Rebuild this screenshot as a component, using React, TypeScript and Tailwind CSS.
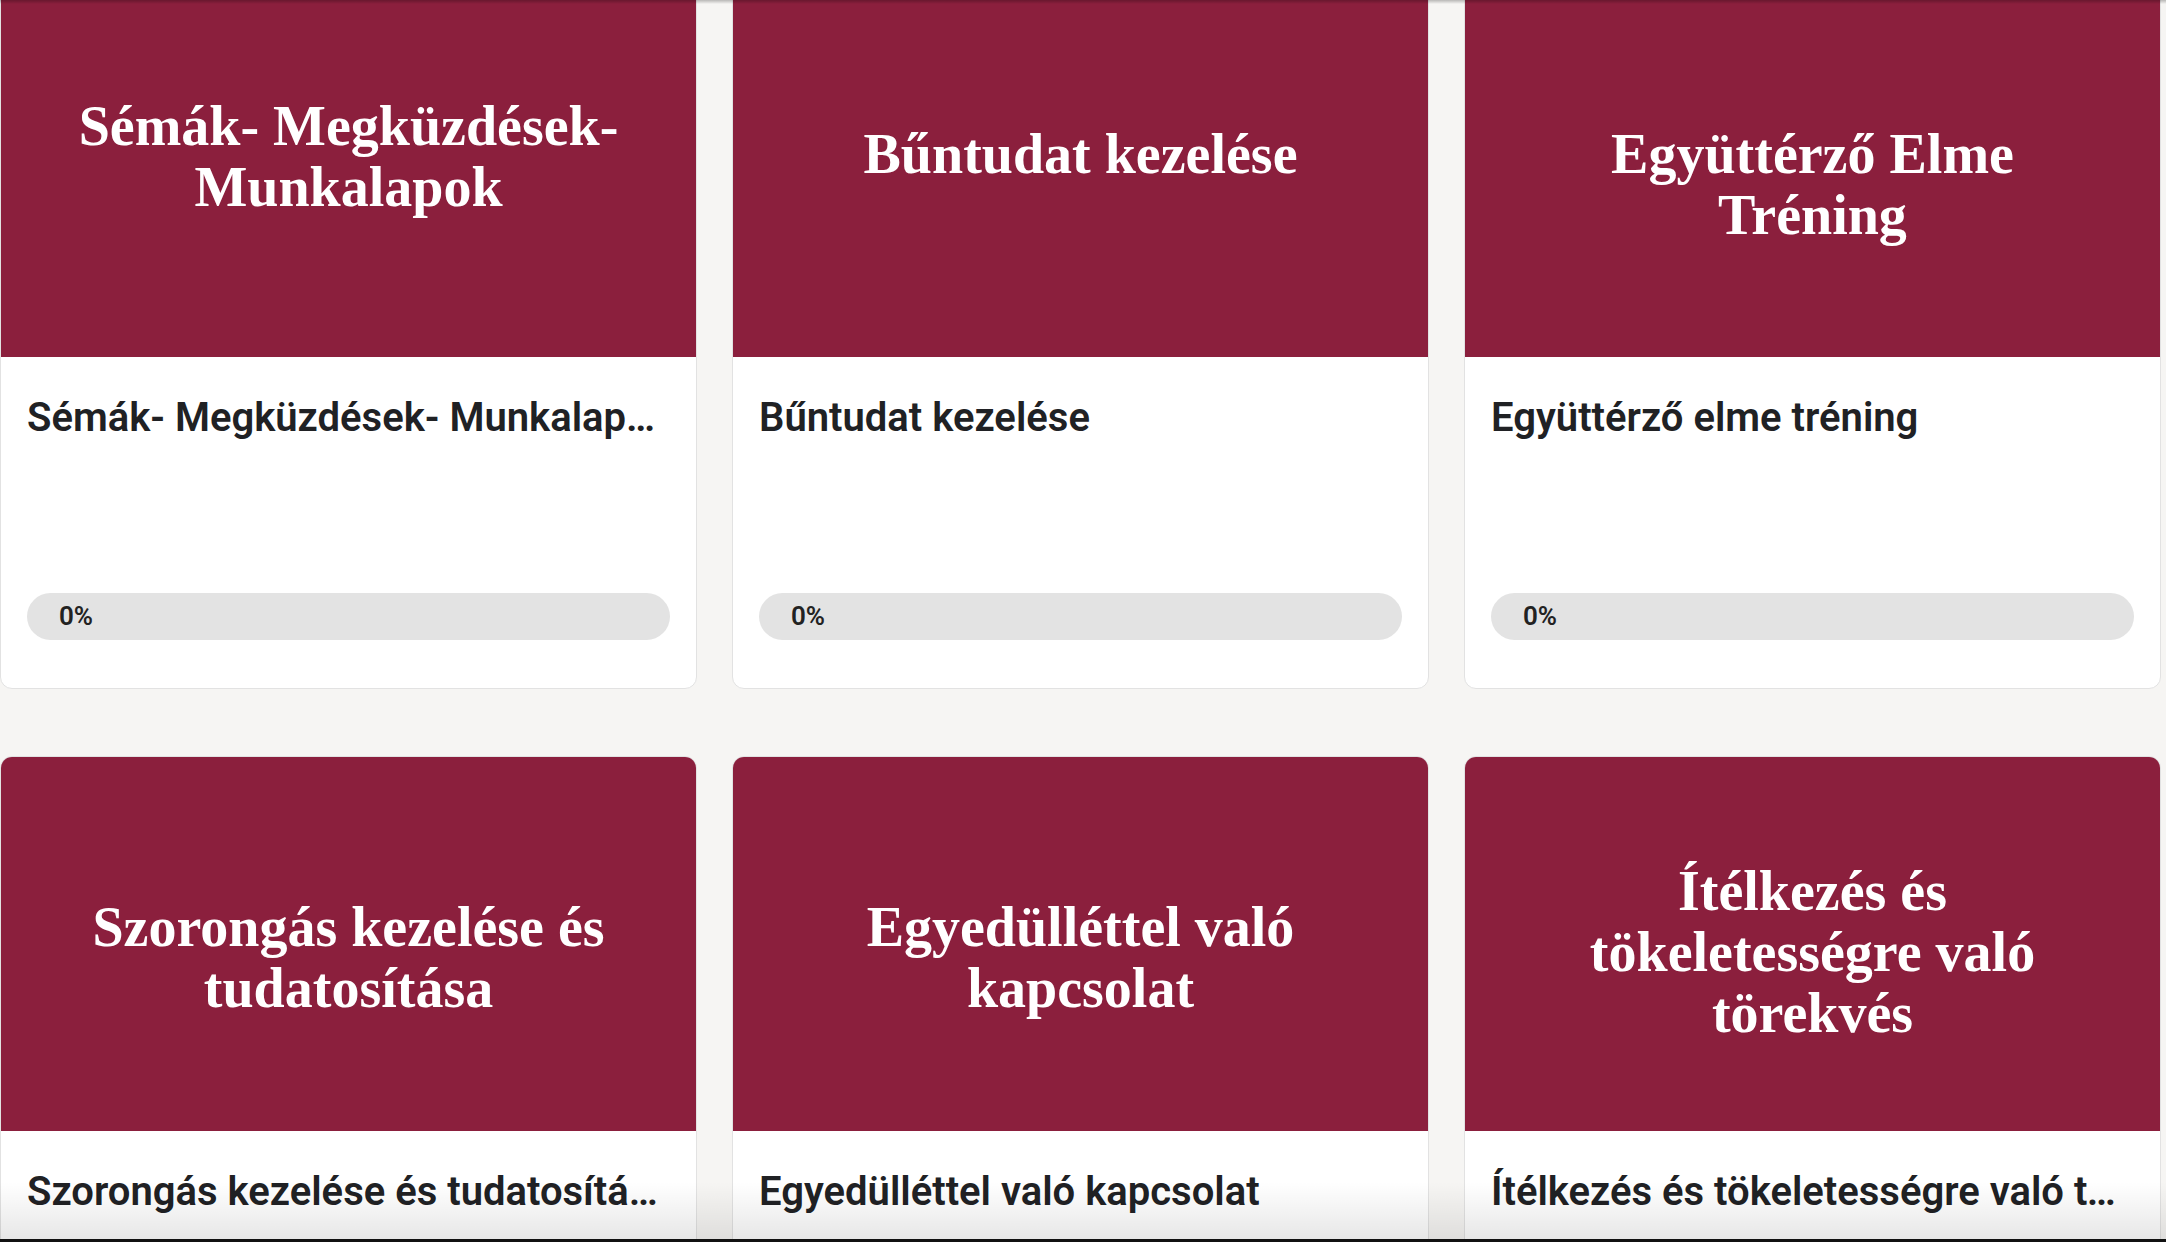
import React from "react";

type Course = {
  id: number;
  cover: string[];
  coverPad: string;
  title: string;
  progress: number;
};

const courses: Course[] = [
  {
    id: 1,
    cover: ["Sémák- Megküzdések-", "Munkalapok"],
    coverPad: "pb-[26px]",
    title: "Sémák- Megküzdések- Munkalapok",
    progress: 0,
  },
  {
    id: 2,
    cover: ["Bűntudat kezelése"],
    coverPad: "pb-[32px]",
    title: "Bűntudat kezelése",
    progress: 0,
  },
  {
    id: 3,
    cover: ["Együttérző Elme", "Tréning"],
    coverPad: "pt-[30px]",
    title: "Együttérző elme tréning",
    progress: 0,
  },
  {
    id: 4,
    cover: ["Szorongás kezelése és", "tudatosítása"],
    coverPad: "pt-[28px]",
    title: "Szorongás kezelése és tudatosítása",
    progress: 0,
  },
  {
    id: 5,
    cover: ["Egyedülléttel való", "kapcsolat"],
    coverPad: "pt-[28px]",
    title: "Egyedülléttel való kapcsolat",
    progress: 0,
  },
  {
    id: 6,
    cover: ["Ítélkezés és", "tökeletességre való", "törekvés"],
    coverPad: "pt-[16px]",
    title: "Ítélkezés és tökeletességre való törekvés",
    progress: 0,
  },
];

const CourseCard: React.FC<{ course: Course }> = ({ course }) => {
  return (
    <div className="overflow-hidden rounded-[12px] border border-[#e2e2e2] bg-white">
      <div
        className={`flex h-[374px] flex-col items-center justify-center bg-[#8b1f3d] text-center font-['Liberation_Serif',serif] text-[56px] font-bold leading-[61px] text-white ${course.coverPad}`}
      >
        {course.cover.map((line) => (
          <div key={line}>{line}</div>
        ))}
      </div>
      <div className="flex h-[331px] flex-col px-[26px] pt-[37px] pb-[48px]">
        <h3 className="truncate pr-[8px] font-['Roboto',sans-serif] text-[40px] font-semibold leading-[1.2] text-[#202124]">
          {course.title}
        </h3>
        <div className="relative mt-auto h-[47px] overflow-hidden rounded-full bg-[#e3e3e3]">
          <div
            className="absolute inset-y-0 left-0 bg-[#8b1f3d]"
            style={{ width: `${course.progress}%` }}
          />
          <span className="relative flex h-full items-center pl-[32px] font-['Roboto',sans-serif] text-[26px] font-semibold text-[#222]">
            {course.progress}%
          </span>
        </div>
      </div>
    </div>
  );
};

export default function App() {
  return (
    <div className="relative h-screen overflow-hidden bg-[#f6f5f3]">
      <div className="-mt-[18px] grid grid-cols-[repeat(3,697px)] gap-x-[35px] gap-y-[67px]">
        {courses.map((course) => (
          <CourseCard key={course.id} course={course} />
        ))}
      </div>
      <div className="pointer-events-none absolute inset-x-0 top-0 h-[4px] bg-linear-to-b from-black/25 to-transparent" />
      <div className="pointer-events-none absolute inset-x-0 bottom-0 h-[60px] bg-linear-to-b from-transparent to-black/10" />
      <div className="absolute inset-x-0 bottom-0 h-[3px] bg-[#111]" />
    </div>
  );
}
